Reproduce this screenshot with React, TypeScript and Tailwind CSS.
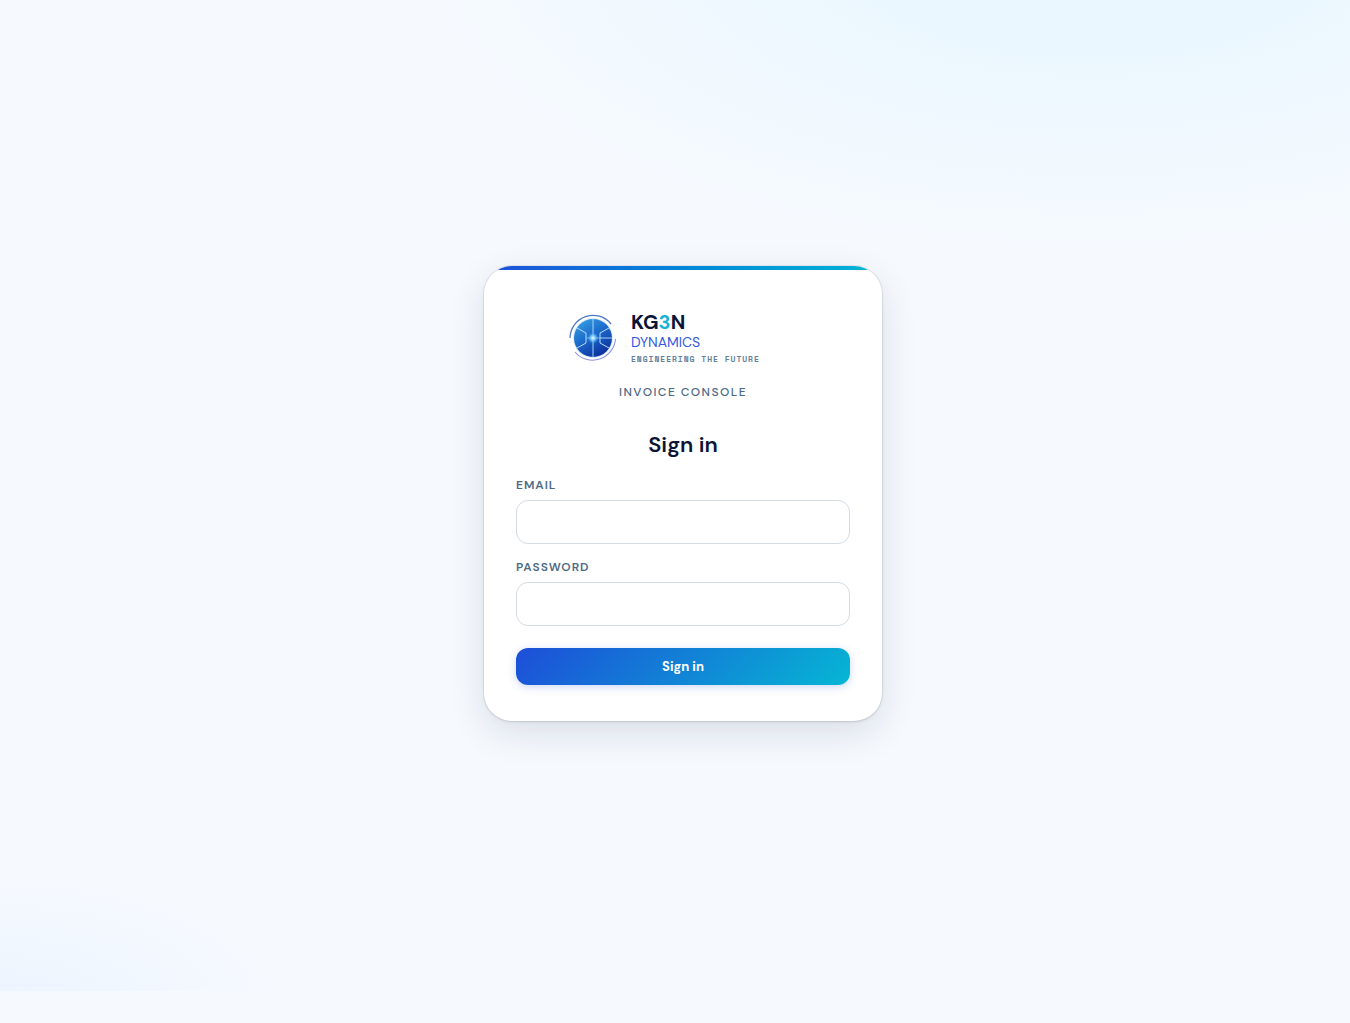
import type { InputHTMLAttributes } from 'react';

function LogoMark() {
  return (
    <svg viewBox="0 0 48 48" className="size-12 shrink-0" fill="none" aria-hidden="true">
      <defs>
        <linearGradient id="disc" x1="12" y1="6" x2="34" y2="42" gradientUnits="userSpaceOnUse">
          <stop stopColor="#369fe2" />
          <stop offset="0.45" stopColor="#1c6ccc" />
          <stop offset="1" stopColor="#0c2f9c" />
        </linearGradient>
        <radialGradient id="core">
          <stop stopColor="#e0f7ff" />
          <stop offset="0.4" stopColor="#8fd8fb" stopOpacity="0.85" />
          <stop offset="1" stopColor="#249be7" stopOpacity="0" />
        </radialGradient>
      </defs>
      <circle cx="24" cy="25" r="20" fill="#a9d3f5" opacity="0.4" />
      <circle cx="24" cy="25" r="19" fill="url(#disc)" />
      <path d="M24 6v38M31 25h12" stroke="#a4d4f7" strokeWidth="1" />
      <path d="M8 15l9 5v10l-9 5M40 15l-9 5v10l9 5" stroke="#b5dcf8" strokeWidth="1" />
      <path d="M17 25h14" stroke="#8fd2f9" strokeWidth="0.8" />
      <circle cx="24" cy="25" r="6" fill="url(#core)" />
      <path d="M1 25A23 23 0 0 1 42 11" stroke="#4c7ac6" strokeWidth="1.3" />
      <path d="M46.5 26A23 23 0 0 1 6 39" stroke="#8a93df" strokeWidth="1.1" />
    </svg>
  );
}

type FieldProps = InputHTMLAttributes<HTMLInputElement> & { id: string; label: string };

function Field({ id, label, ...props }: FieldProps) {
  return (
    <div>
      <label htmlFor={id} className="block text-xs leading-4 font-semibold tracking-[0.08em] text-[#4c6a85] uppercase">
        {label}
      </label>
      <input
        id={id}
        className="mt-[7px] block h-11 w-full rounded-xl border border-[#d3dbe5] bg-white px-4 text-sm text-[#0b1437] outline-none focus:border-[#1d4ed8]"
        {...props}
      />
    </div>
  );
}

export default function App() {
  return (
    <div className="flex min-h-screen flex-col bg-[#f6faff] pb-8 font-['DM_Sans',Inter,sans-serif]">
      <main className="flex flex-1 items-center justify-center bg-[radial-gradient(ellipse_700px_320px_at_81%_-6%,rgba(34,190,245,0.08),transparent),radial-gradient(ellipse_290px_140px_at_0%_102%,rgba(59,130,246,0.05),transparent)] pb-1 pl-4">
        <section className="w-full max-w-[398px] overflow-hidden rounded-[28px] bg-white shadow-[0_0_0_1px_rgba(15,23,42,0.06),0_1px_3px_rgba(15,23,42,0.1),0_12px_36px_rgba(15,23,42,0.12)]">
          <div className="h-1 bg-linear-to-r from-[#1d4ed8] to-[#06b6d4]" />
          <div className="px-8 pt-10 pb-9">
            <div className="flex items-center gap-[14px] pl-[53px]">
              <LogoMark />
              <div className="whitespace-nowrap">
                <p className="text-[20px] leading-6 font-bold text-[#0b1437]">
                  KG<span className="text-[#16b1d4]">3</span>N
                </p>
                <p className="text-sm leading-4 text-[#3559df]">DYNAMICS</p>
                <p className="mt-1 font-['Space_Mono','JetBrains_Mono','Liberation_Mono',monospace] text-[8px] leading-[10px] font-bold tracking-[0.12em] text-[#64809b]">
                  ENGINEERING THE FUTURE
                </p>
              </div>
            </div>
            <p className="mt-5 text-center text-xs leading-4 font-medium tracking-[0.12em] text-[#4c6a85]">
              INVOICE CONSOLE
            </p>
            <h1 className="mt-[29px] text-center text-[22px] leading-8 font-semibold text-[#0b1437]">Sign in</h1>
            <form className="mt-4 flex flex-col gap-[15px]" onSubmit={(e) => e.preventDefault()}>
              <Field id="email" label="Email" type="email" autoComplete="email" />
              <Field id="password" label="Password" type="password" autoComplete="current-password" />
              <button
                type="submit"
                className="mt-[7px] h-[37px] w-full cursor-pointer rounded-xl bg-[linear-gradient(135deg,#1d4ed8,#06b6d4)] text-[13px] font-bold text-white shadow-[0_2px_8px_rgba(29,78,216,0.22)]"
              >
                Sign in
              </button>
            </form>
          </div>
        </section>
      </main>
    </div>
  );
}
